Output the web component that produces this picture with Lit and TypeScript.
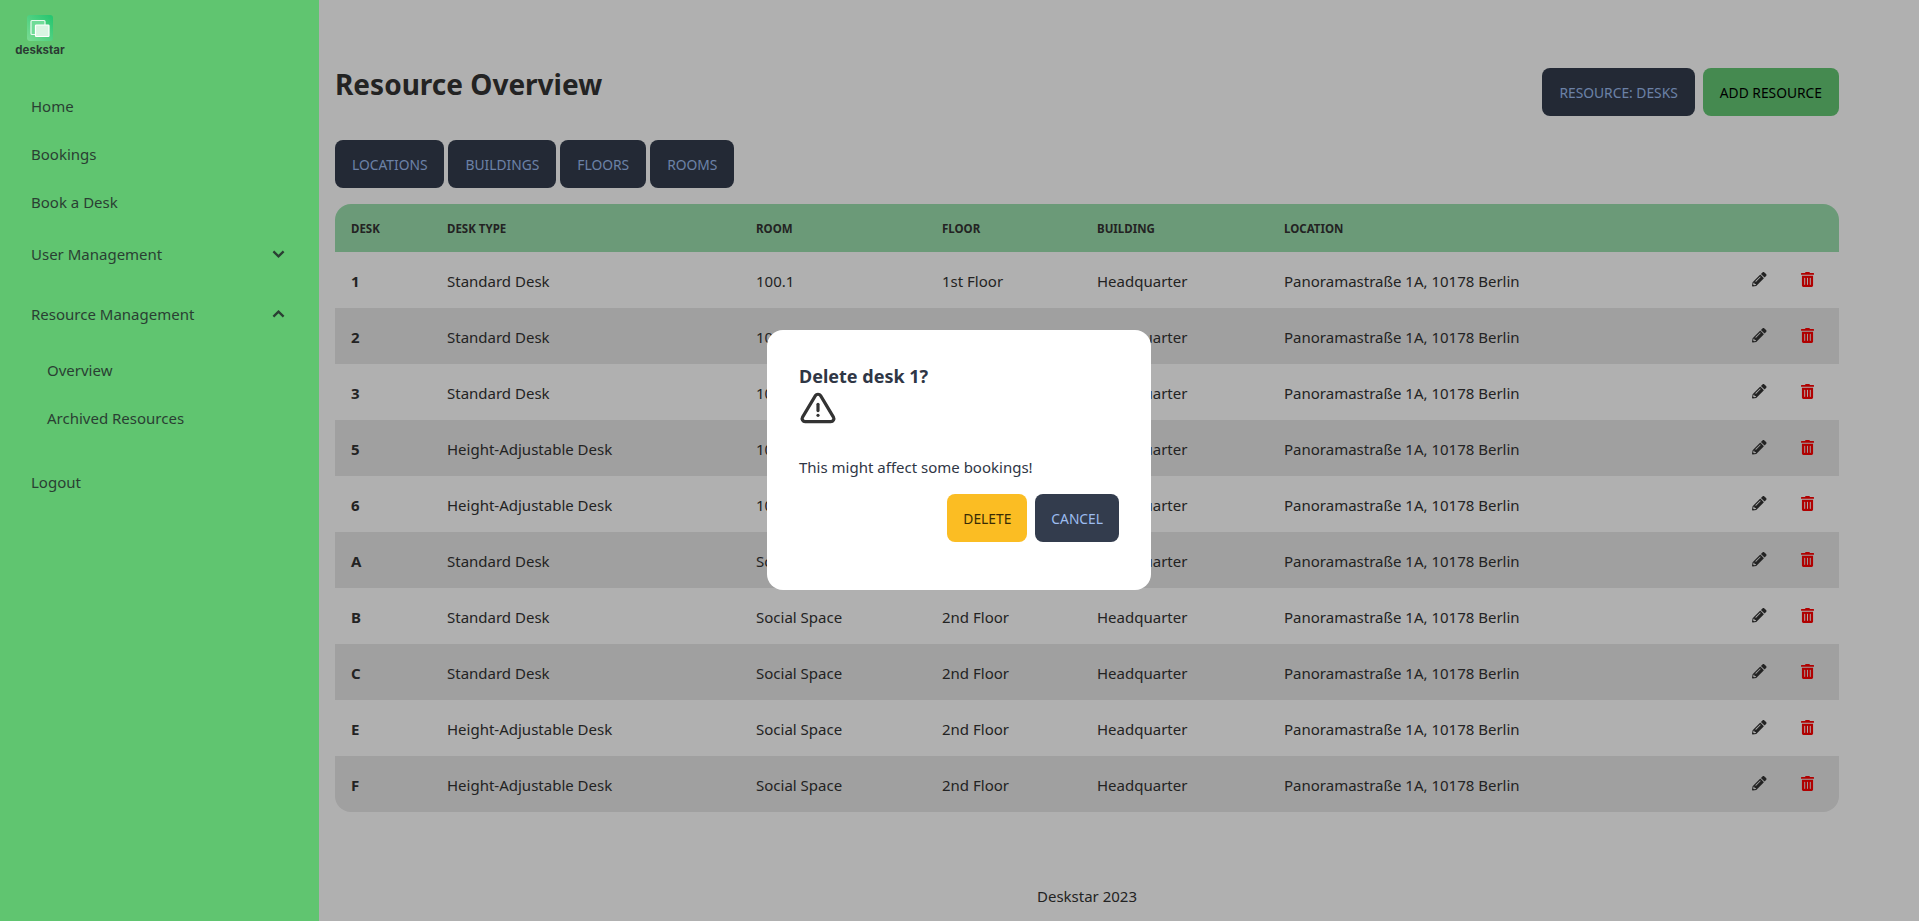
import { html, css, LitElement, svg } from 'lit';
import { customElement } from 'lit/decorators.js';

const PENCIL = 'M497.9 142.1l-46.1 46.1c-4.7 4.7-12.3 4.7-17 0l-111-111c-4.7-4.7-4.7-12.3 0-17l46.1-46.1c18.7-18.7 49.1-18.7 67.9 0l60.1 60.1c18.8 18.7 18.8 49.1 0 67.9zM284.2 99.8L21.6 362.4.4 483.9c-2.9 16.4 11.4 30.6 27.8 27.8l121.5-21.3 262.6-262.6c4.7-4.7 4.7-12.3 0-17l-111-111c-4.8-4.7-12.4-4.7-17.1 0zM124.1 339.9c-5.5-5.5-5.5-14.3 0-19.8l154-154c5.5-5.5 14.3-5.5 19.8 0s5.5 14.3 0 19.8l-154 154c-5.5 5.5-14.3 5.5-19.8 0zM88 424h48v36.3l-64.5 11.3-31.1-31.1L51.7 376H88v48z';
const TRASH = 'M32 464a48 48 0 0 0 48 48h288a48 48 0 0 0 48-48V128H32zm272-256a16 16 0 0 1 32 0v224a16 16 0 0 1-32 0zm-96 0a16 16 0 0 1 32 0v224a16 16 0 0 1-32 0zm-96 0a16 16 0 0 1 32 0v224a16 16 0 0 1-32 0zM432 32H312l-9.4-18.7A24 24 0 0 0 281.1 0H166.8a23.72 23.72 0 0 0-21.4 13.3L136 32H16A16 16 0 0 0 0 48v32a16 16 0 0 0 16 16h416a16 16 0 0 0 16-16V48a16 16 0 0 0-16-16z';

const ADDRESS = 'Panoramastraße 1A, 10178 Berlin';

const DESKS = [
  ['1', 'Standard Desk', '100.1', '1st Floor'],
  ['2', 'Standard Desk', '100.1', '1st Floor'],
  ['3', 'Standard Desk', '100.1', '1st Floor'],
  ['5', 'Height-Adjustable Desk', '100.1', '1st Floor'],
  ['6', 'Height-Adjustable Desk', '100.1', '1st Floor'],
  ['A', 'Standard Desk', 'Social Space', '2nd Floor'],
  ['B', 'Standard Desk', 'Social Space', '2nd Floor'],
  ['C', 'Standard Desk', 'Social Space', '2nd Floor'],
  ['E', 'Height-Adjustable Desk', 'Social Space', '2nd Floor'],
  ['F', 'Height-Adjustable Desk', 'Social Space', '2nd Floor'],
];

const chevron = (up: boolean) => html`
  <svg class="chevron" viewBox="0 0 13 8" width="13" height="8">
    <path d=${up ? 'M1.4 6.6 6.5 1.6l5.1 5' : 'M1.4 1.4 6.5 6.4l5.1-5'} fill="none" stroke="currentColor" stroke-width="2.3"/>
  </svg>
`;

@customElement('app-root')
export class AppRoot extends LitElement {
  static styles = css`
    :host {
      display: block;
      height: 921px;
      overflow: hidden;
      font-family: 'Noto Sans', sans-serif;
      color: #333;
      background: #fff;
    }

    .layout {
      display: flex;
      height: 100%;
    }

    .sidebar {
      position: relative;
      z-index: 2;
      width: 319px;
      flex-shrink: 0;
      box-sizing: border-box;
      background: #60c570;
      color: #2a3f33;
      font-size: 15px;
      padding-left: 31px;
    }

    .logo {
      width: 48px;
      margin-left: -15px;
      height: 82px;
      padding-top: 15px;
      box-sizing: border-box;
      display: flex;
      flex-direction: column;
      align-items: center;
      color: #2b3a33;
    }

    .logo span {
      font-family: 'Inter', sans-serif;
      font-weight: 700;
      font-size: 11.5px;
      line-height: 13px;
      margin-top: 3px;
    }

    .nav-item {
      height: 48px;
      display: flex;
      align-items: center;
      justify-content: space-between;
      padding-right: 34px;
    }

    .nav-item.group {
      height: 56px;
    }

    .nav-item.group.second {
      margin-top: 4px;
      margin-bottom: 4px;
    }

    .nav-item.sub {
      padding-left: 16px;
    }

    .nav-item.logout {
      margin-top: 16px;
    }

    .main {
      flex: 1;
      min-width: 0;
      padding: 0 80px 0 16px;
      display: flex;
      flex-direction: column;
    }

    .head {
      display: flex;
      justify-content: space-between;
      padding-top: 68px;
      height: 48px;
    }

    h1 {
      margin: 0;
      font-size: 28px;
      line-height: 32px;
      font-weight: 700;
    }

    .btn-row {
      display: flex;
      gap: 8px;
    }

    .tabs {
      display: flex;
      gap: 4px;
      margin-top: 24px;
    }

    .btn {
      height: 48px;
      box-sizing: border-box;
      padding: 0 17px;
      display: flex;
      align-items: center;
      border-radius: 8px;
      font-size: 13.8px;
      font-weight: 400;
      text-transform: uppercase;
      background: #333c4d;
      color: #9dbcf0;
    }

    .btn.green {
      background: #64c974;
      color: #000;
    }

    .btn.yellow {
      background: #fbbd23;
      color: #382b05;
    }

    .table-wrap {
      margin-top: 16px;
      border-radius: 16px;
      overflow: hidden;
    }

    table {
      width: 100%;
      border-collapse: collapse;
      table-layout: fixed;
      font-size: 15px;
    }

    th {
      height: 48px;
      padding: 0 16px;
      text-align: left;
      font-size: 11.5px;
      font-weight: 700;
      text-transform: uppercase;
      background: #9ce0ae;
    }

    td {
      height: 56px;
      box-sizing: border-box;
      padding: 1px 16px 0;
      white-space: nowrap;
    }

    tbody tr:nth-child(even) {
      background: #e8e8e8;
    }

    td.id {
      font-weight: 700;
    }

    .pencil {
      display: block;
      width: 14.5px;
      height: 14.5px;
      fill: #333;
      transform: translateY(-1px);
    }

    .trash {
      display: block;
      width: 13px;
      height: 15px;
      fill: #ff0000;
      transform: translateY(-1px);
    }

    footer {
      margin-top: auto;
      height: 50px;
      display: flex;
      align-items: center;
      justify-content: center;
      font-size: 15px;
    }

    .overlay {
      position: fixed;
      inset: 0;
      z-index: 1;
      box-sizing: border-box;
      padding: 0 1px 1px 0;
      background: rgba(0, 0, 0, 0.31);
      display: flex;
      align-items: center;
      justify-content: center;
    }

    .modal {
      width: 384px;
      height: 260px;
      box-sizing: border-box;
      padding: 32px;
      background: #fff;
      border-radius: 16px;
      color: #2f3645;
    }

    .modal h3 {
      margin: 0;
      font-size: 18px;
      line-height: 28px;
      font-weight: 700;
    }

    .modal svg {
      display: block;
      color: #333;
    }

    .modal p {
      margin: 27px 0 0;
      font-size: 15px;
      line-height: 24px;
    }

    .actions {
      display: flex;
      justify-content: flex-end;
      gap: 8px;
      margin-top: 15px;
    }

    .actions .btn {
      padding: 0 16px;
    }
  `;

  private _logo() {
    return html`
      <svg width="26" height="26" viewBox="0 0 26 26">
        <defs>
          <linearGradient id="logo-bg" x1="0" y1="1" x2="1" y2="0">
            <stop offset="0" stop-color="#7cdc94"/>
            <stop offset="1" stop-color="#22c56e"/>
          </linearGradient>
        </defs>
        <rect width="26" height="26" rx="3" fill="url(#logo-bg)"/>
        ${svg`<rect x="4" y="5.5" width="14" height="14" rx="1" fill="#6fdc98" stroke="#e6faed" stroke-width="1.2"/>
        <rect x="8.5" y="10" width="13.5" height="11.5" rx="0.8" fill="#d9f5e2" stroke="#fff" stroke-width="1.2"/>`}
      </svg>
      <span>deskstar</span>
    `;
  }

  private _row(d: string[]) {
    return html`
      <tr>
        <td class="id">${d[0]}</td>
        <td>${d[1]}</td>
        <td>${d[2]}</td>
        <td>${d[3]}</td>
        <td>Headquarter</td>
        <td>${ADDRESS}</td>
        <td><svg class="pencil" viewBox="0 0 512 512"><path d=${PENCIL}/></svg></td>
        <td><svg class="trash" viewBox="0 0 448 512"><path d=${TRASH}/></svg></td>
      </tr>
    `;
  }

  render() {
    return html`
      <div class="layout">
        <aside class="sidebar">
          <div class="logo">${this._logo()}</div>
          <div class="nav-item">Home</div>
          <div class="nav-item">Bookings</div>
          <div class="nav-item">Book a Desk</div>
          <div class="nav-item group">User Management ${chevron(false)}</div>
          <div class="nav-item group second">Resource Management ${chevron(true)}</div>
          <div class="nav-item sub">Overview</div>
          <div class="nav-item sub">Archived Resources</div>
          <div class="nav-item logout">Logout</div>
        </aside>
        <main class="main">
          <div class="head">
            <h1>Resource Overview</h1>
            <div class="btn-row">
              <div class="btn">Resource: Desks</div>
              <div class="btn green">Add Resource</div>
            </div>
          </div>
          <div class="tabs">
            <div class="btn">Locations</div>
            <div class="btn">Buildings</div>
            <div class="btn">Floors</div>
            <div class="btn">Rooms</div>
          </div>
          <div class="table-wrap">
            <table>
              <colgroup>
                <col style="width:96px"><col style="width:309px"><col style="width:186px">
                <col style="width:155px"><col style="width:187px"><col style="width:468px">
                <col style="width:49px"><col style="width:54px">
              </colgroup>
              <thead>
                <tr><th>Desk</th><th>Desk Type</th><th>Room</th><th>Floor</th><th>Building</th><th>Location</th><th></th><th></th></tr>
              </thead>
              <tbody>${DESKS.map((d) => this._row(d))}</tbody>
            </table>
          </div>
          <footer>Deskstar 2023</footer>
        </main>
      </div>
      <div class="overlay">
        <div class="modal">
          <h3>Delete desk 1?</h3>
          <svg width="38" height="38" viewBox="0 0 24 24" fill="none" stroke="currentColor" stroke-width="2" stroke-linecap="round" stroke-linejoin="round">
            <path d="M12 9v4"/>
            <path d="M10.363 3.591l-8.106 13.534a1.914 1.914 0 0 0 1.636 2.871h16.214a1.914 1.914 0 0 0 1.636 -2.87l-8.106 -13.536a1.914 1.914 0 0 0 -3.274 0z"/>
            <path d="M12 16h.01"/>
          </svg>
          <p>This might affect some bookings!</p>
          <div class="actions">
            <div class="btn yellow">Delete</div>
            <div class="btn">Cancel</div>
          </div>
        </div>
      </div>
    `;
  }
}
